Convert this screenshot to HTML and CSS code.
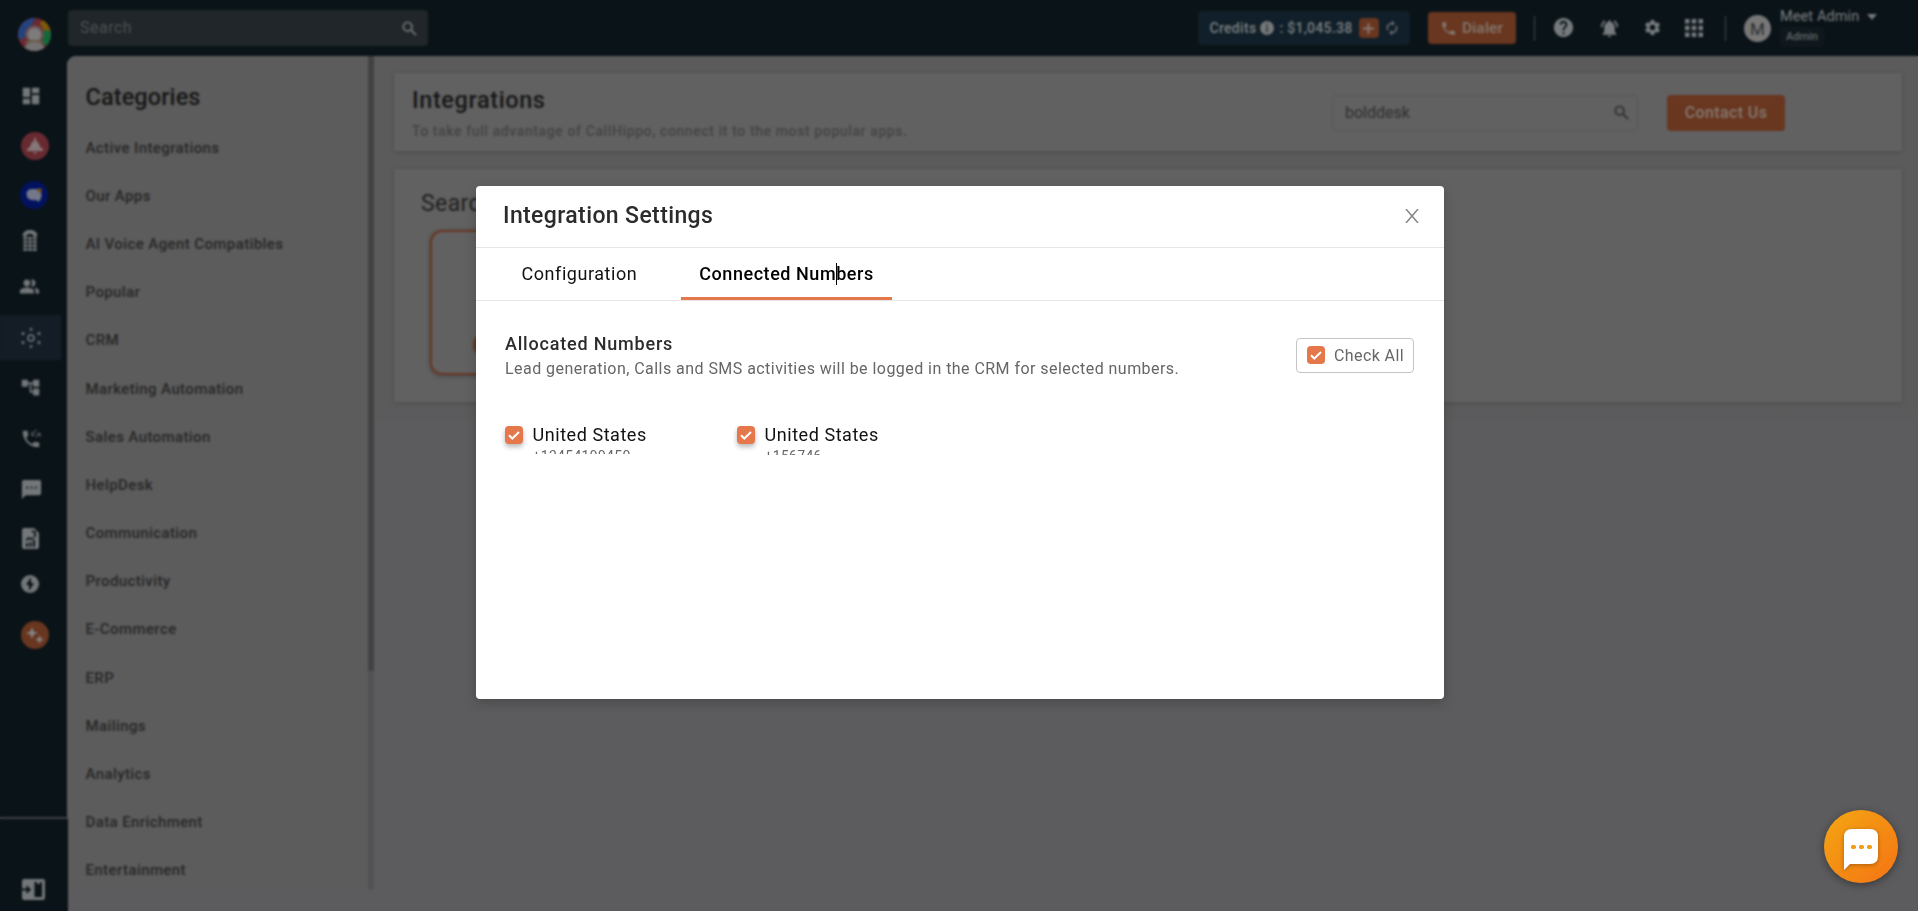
FILE: index.html
```html
<!DOCTYPE html>
<html lang="en">
<head>
<meta charset="utf-8">
<title>Integrations</title>
<link rel="stylesheet" href="styles.css">
</head>
<body>
<div class="app">
  <aside class="rail">
    <svg class="logo" viewBox="0 0 32 32"><defs><clipPath id="lc"><circle cx="16" cy="16" r="16"/></clipPath></defs><g clip-path="url(#lc)"><rect width="32" height="32" fill="#6b2830"/><path d="M0 20V0h17L6 20z" fill="#26427d"/><path d="M21 5l6-5 5 12-5 3z" fill="#7d5a08"/><path d="M25 12h7v17l-12-6z" fill="#14683a"/><circle cx="16" cy="16" r="9" fill="#6e4f50"/><circle cx="16" cy="16" r="6.500" fill="#7c7c7c"/><path d="M5 32q2-9 11-9t11 9z" fill="#737373"/><path d="M7 24q9-4 18 0" fill="none" stroke="#6d5845" stroke-width="2"/></g></svg>
    <svg class="ic i1" viewBox="0 0 24 24"><path d="M3 13h8V3H3v10zm0 8h8v-6H3v6zm10 0h8V11h-8v10zm0-18v6h8V3h-8z"/></svg>
    <svg class="round i2" viewBox="0 0 28 28"><circle cx="14" cy="14" r="14" fill="#682a31"/><path d="M13 6h2v3q3 1 4 6l3 2v2H6v-2l3-2q1-5 4-6zM12 20h4l-2 2z" fill="#857678"/></svg>
    <svg class="round i3" viewBox="0 0 28 28"><circle cx="14" cy="14" r="14" fill="#02125f"/><path d="M6.500 13q0-5 6-5h4q5 1 5 6 0 4-2 5v2l-4-2q-9 1-9-6z" fill="#73788a"/><circle cx="19.500" cy="9.500" r="2.300" fill="#7d5420"/></svg>
    <svg class="ic i4" viewBox="0 0 16 22"><path d="M0 6q1-6 8-6t8 6l-4 1q-1-3-4-3T4 7z"/><path d="M1 7h4v3H1zm5 0h4v3H6zm5 0h4v3h-4zM1 11h4v3H1zm5 0h4v3H6zm5 0h4v3h-4zM1 15h4v3H1zm5 0h4v3H6zm5 0h4v3h-4zM1 19h4v3H1zm5 0h4v3H6zm5 0h4v3h-4z"/></svg>
    <svg class="ic i5" viewBox="0 0 24 24"><path d="M16.670 13.130C18.040 14.060 19 15.320 19 17v3h4v-3c0-2.180-3.570-3.470-6.330-3.870zM15 12c2.210 0 4-1.790 4-4s-1.790-4-4-4c-.47 0-.91.1-1.330.24C14.500 5.270 15 6.580 15 8s-.5 2.730-1.330 3.760c.42.140.86.240 1.330.24zM9 12c2.210 0 4-1.790 4-4s-1.790-4-4-4-4 1.790-4 4 1.790 4 4 4zm0 1c-2.670 0-8 1.340-8 4v3h16v-3c0-2.660-5.330-4-8-4z"/></svg>
    <div class="active"><svg class="ic" viewBox="0 0 20 20"><circle cx="10" cy="10" r="3" fill="none" stroke="#70767b" stroke-width="1.600"/><g><circle cx="10" cy="1.400" r="1.400"/><circle cx="10" cy="18.600" r="1.400"/><circle cx="2" cy="5.500" r="1.500"/><circle cx="18" cy="5.500" r="1.500"/><circle cx="2" cy="14.500" r="1.500"/><circle cx="18" cy="14.500" r="1.500"/></g></svg></div>
    <svg class="ic i7" viewBox="0 0 24 24"><path d="M22 11V3h-7v3H9V3H2v8h7V8h2v10h4v3h7v-8h-7v3h-2V8h2v3z"/></svg>
    <svg class="ic i8" viewBox="0 0 24 24"><path d="M20 15.500c-1.250 0-2.450-.2-3.570-.57-.35-.11-.74-.03-1.020.24l-2.200 2.200c-2.830-1.440-5.150-3.750-6.590-6.590l2.200-2.210c.28-.26.36-.65.25-1C8.700 6.450 8.500 5.250 8.500 4c0-.55-.45-1-1-1H4c-.55 0-1 .45-1 1 0 9.390 7.610 17 17 17 .55 0 1-.45 1-1v-3.500c0-.55-.45-1-1-1z"/><path d="M18 2l-5 5V4M12 8h4M17 10l5-4v4M22 6h-4" fill="none" stroke="#5a5e60" stroke-width="1.200"/></svg>
    <svg class="ic i9" viewBox="0 0 24 24"><path d="M20 2H4c-1.100 0-2 .9-2 2v18l4-4h14c1.100 0 2-.9 2-2V4c0-1.100-.9-2-2-2zM8.500 11h-2V9h2zm4.500 0h-2V9h2zm4.500 0h-2V9h2z"/></svg>
    <svg class="ic i10" viewBox="0 0 17 21"><path d="M2 0h10l5 5v14q0 2-2 2H2q-2 0-2-2V2q0-2 2-2z"/><path d="M9.500 3l3.500 1v5M4 12l3-2 2 1 3-1" fill="none" stroke="#0a1318" stroke-width="1.800"/><path d="M4 15h2v4H4zm3.500-1h2v5h-2zm3.500-2h2v7h-2z" fill="#0a1318"/></svg>
    <svg class="ic i11" viewBox="0 0 18 18"><circle cx="9" cy="9" r="9"/><path d="M10 2L5 10h3v6l5-8h-3z" fill="#0a1318"/></svg>
    <svg class="round i12" viewBox="0 0 28 28"><circle cx="14" cy="14" r="14" fill="#693620"/><path d="M11 6l1.600 4.400L17 12l-4.400 1.600L11 18l-1.600-4.400L5 12l4.400-1.600zM18.500 14l1.200 3.300 3.300 1.200-3.300 1.200-1.200 3.300-1.200-3.300-3.300-1.200 3.300-1.200z" fill="#858585"/></svg>
    <div class="railfoot"><svg class="ic" viewBox="0 0 23 21"><rect width="23" height="21" rx="2"/><path d="M12.500 3H20v15h-7.500z" fill="#0a1318"/><path d="M15 3h3v2h-3z"/><path d="M0 9.500h4.500V6L9 10.500 4.500 15v-3.500H0z" fill="#0a1318"/></svg></div>
  </aside>
  <div class="page">
    <header class="top">
      <div class="gsearch"><span>Search</span><svg viewBox="0 0 16 16"><circle cx="6" cy="6" r="4.600"/><path d="M9.500 9.500L15 15"/></svg></div>
      <div class="credits"><span>Credits</span><svg class="info" viewBox="0 0 14 14"><circle cx="7" cy="7" r="7" fill="#777"/><path d="M6 3h2v2H6zm0 3h2v5H6z" fill="#33424a"/></svg><span class="amt">: $1,045.38</span><b class="plus"><svg viewBox="0 0 12 12"><path d="M6 0v12M0 6h12" stroke="#857a74" stroke-width="2"/></svg></b><svg class="sync" viewBox="0 0 24 24"><path d="M12 6v3l4-4-4-4v3c-4.420 0-8 3.580-8 8 0 1.570.46 3.030 1.240 4.260L6.700 14.800c-.45-.83-.7-1.790-.7-2.800 0-3.310 2.690-6 6-6zm6.760 1.740L17.300 9.200c.44.840.7 1.790.7 2.800 0 3.310-2.690 6-6 6v-3l-4 4 4 4v-3c4.420 0 8-3.580 8-8 0-1.570-.46-3.030-1.240-4.260z"/></svg></div>
      <div class="dialer"><svg viewBox="0 0 24 24"><path d="M6.620 10.790c1.440 2.830 3.760 5.140 6.590 6.590l2.200-2.200c.27-.27.67-.36 1.020-.24 1.120.37 2.330.57 3.570.57.55 0 1 .45 1 1V20c0 .55-.45 1-1 1C10.610 21 3 13.390 3 4c0-.55.45-1 1-1h3.500c.55 0 1 .45 1 1 0 1.250.2 2.450.57 3.570.11.35.03.74-.25 1.020z"/></svg>Dialer</div>
      <i class="sep s1"></i>
      <svg class="tic help" viewBox="0 0 24 24"><path d="M12 2C6.480 2 2 6.480 2 12s4.480 10 10 10 10-4.480 10-10S17.520 2 12 2zm1 17h-2v-2h2zm2.070-7.750l-.9.920C13.450 12.900 13 13.500 13 15h-2v-.5c0-1.100.45-2.100 1.170-2.830l1.240-1.260c.37-.36.59-.86.59-1.410 0-1.100-.9-2-2-2s-2 .9-2 2H8c0-2.210 1.790-4 4-4s4 1.790 4 4c0 .88-.36 1.680-.93 2.250z"/></svg>
      <svg class="tic bell" viewBox="0 0 24 24"><path d="M7.580 4.080L6.150 2.650C3.750 4.480 2.170 7.300 2.030 10.500h2c.15-2.650 1.510-4.970 3.550-6.420zm12.390 6.420h2c-.15-3.200-1.730-6.020-4.120-7.850l-1.420 1.430c2.020 1.450 3.390 3.770 3.540 6.420zM18 11c0-3.070-1.640-5.640-4.500-6.320V4c0-.83-.67-1.500-1.500-1.500s-1.500.67-1.500 1.500v.68C7.630 5.360 6 7.920 6 11v5l-2 2v1h16v-1l-2-2zm-6 11c1.100 0 2-.9 2-2h-4c0 1.100.9 2 2 2z"/></svg>
      <svg class="tic gear" viewBox="0 0 24 24"><path d="M19.140 12.940c.04-.3.060-.61.060-.94s-.02-.64-.07-.94l2.030-1.580c.18-.14.23-.41.12-.61l-1.920-3.320c-.12-.22-.37-.29-.59-.22l-2.390.96c-.5-.38-1.030-.7-1.620-.94l-.36-2.540c-.04-.24-.24-.41-.48-.41h-3.840c-.24 0-.43.17-.47.41l-.36 2.540c-.59.24-1.130.57-1.620.94l-2.390-.96c-.22-.08-.47 0-.59.22L2.740 8.870c-.12.210-.08.470.12.610l2.030 1.580c-.05.3-.09.63-.09.940s.02.640.07.940l-2.030 1.580c-.18.140-.23.410-.12.610l1.920 3.320c.12.220.37.290.59.220l2.390-.96c.5.380 1.030.7 1.620.940l.36 2.540c.05.240.24.410.48.410h3.840c.24 0 .44-.17.47-.41l.36-2.540c.59-.24 1.130-.56 1.620-.94l2.390.96c.22.080.47 0 .59-.22l1.920-3.320c.12-.22.070-.47-.12-.61zM12 15.600c-1.980 0-3.600-1.620-3.600-3.600s1.620-3.600 3.600-3.600 3.600 1.620 3.600 3.600-1.620 3.600-3.600 3.600z"/></svg>
      <svg class="tic grid" viewBox="0 0 18 18"><path d="M0 0h4.500v4.500H0zm6.750 0h4.500v4.500h-4.500zm6.750 0H18v4.500h-4.500zM0 6.750h4.500v4.500H0zm6.750 0h4.500v4.500h-4.500zm6.750 0H18v4.500h-4.500zM0 13.500h4.500V18H0zm6.750 0h4.500V18h-4.500zm6.750 0H18V18h-4.500z"/></svg>
      <i class="sep s2"></i>
      <div class="avatar">M</div>
      <div class="user"><div class="uname">Meet Admin<i class="caret"></i></div><div class="role">Admin</div></div>
    </header>
    <div class="body">
      <nav class="cats">
        <h2>Categories</h2>
        <ul><li>Active Integrations</li><li>Our Apps</li><li>AI Voice Agent Compatibles</li><li>Popular</li><li>CRM</li><li>Marketing Automation</li><li>Sales Automation</li><li>HelpDesk</li><li>Communication</li><li>Productivity</li><li>E-Commerce</li><li>ERP</li><li>Mailings</li><li>Analytics</li><li>Data Enrichment</li><li>Entertainment</li></ul>
      </nav>
      <div class="track"><div class="thumb"></div></div>
      <main class="main">
        <section class="card intro">
          <div class="txt"><h1>Integrations</h1><p>To take full advantage of CallHippo, connect it to the most popular apps.</p></div>
          <div class="field"><span>bolddesk</span><svg viewBox="0 0 16 16"><circle cx="6" cy="6" r="4.600"/><path d="M9.500 9.500L15 15"/></svg></div>
          <div class="contact">Contact Us</div>
        </section>
        <section class="card results"><h3>Search</h3><div class="appcard"><div class="pill"></div></div></section>
      </main>
    </div>
  </div>
</div>
<div class="overlay">
  <div class="modal">
    <div class="mhead"><span>Integration Settings</span><svg viewBox="0 0 14 14"><path d="M1 0l12 14M13 0L1 14"/></svg></div>
    <div class="tabs"><div class="tab">Configuration</div><div class="tab on">Connected Num<i class="cursor"></i>bers</div></div>
    <div class="mbody">
      <div class="alloc">
        <div><h4>Allocated Numbers</h4><p>Lead generation, Calls and SMS activities will be logged in the CRM for selected numbers.</p></div>
        <div class="checkall"><b class="cb"><svg viewBox="0 0 18 18"><path d="M4 9.200l3.300 3.300L14 6"/></svg></b>Check All</div>
      </div>
      <div class="nums">
        <div class="num"><b class="cb sh"><svg viewBox="0 0 18 18"><path d="M4 9.200l3.300 3.300L14 6"/></svg></b><div><div class="country">United States</div><div class="tel t1">+13454199450</div></div></div>
        <div class="num"><b class="cb sh"><svg viewBox="0 0 18 18"><path d="M4 9.200l3.300 3.300L14 6"/></svg></b><div><div class="country">United States</div><div class="tel t2">+156746</div></div></div>
      </div>
    </div>
  </div>
</div>
<div class="fab"><svg viewBox="0 0 34 41"><path d="M8 0h18q8 0 8 8v19q0 8-8 8H6l-6 6V8q0-8 8-8z" fill="#fff"/><g fill="#f39c12"><rect x="7" y="16" width="5" height="4" rx="1.800"/><rect x="15" y="16" width="5" height="4" rx="1.800"/><rect x="23" y="16" width="5" height="4" rx="1.800"/></g></svg></div>
</body>
</html>
```
FILE: styles.css
```css
* { box-sizing: border-box; margin: 0; padding: 0; }
body { width: 1918px; height: 911px; overflow: hidden; font-family: Roboto, "Liberation Sans", sans-serif; background: #5c5c5e; }
i { font-style: normal; }
svg { display: block; flex: none; }
.app { display: flex; height: 911px; background: #0a1318; }

.rail { width: 67px; flex: none; display: flex; flex-direction: column; align-items: flex-start; padding-top: 18px; background: #0a1318; position: relative; z-index: 1; }
.ic { fill: #737779; }
.logo { width: 33px; height: 33px; margin-left: 18px; }
.round { width: 28px; height: 28px; }
.i1 { width: 22px; height: 22px; margin: 34px 0 0 20px; }
.i2 { margin: 25px 0 0 21px; }
.i3 { margin: 21px 0 0 20px; }
.i4 { width: 16px; height: 21px; margin: 21px 0 0 22px; }
.i5 { width: 21px; height: 21px; margin: 25px 0 0 19px; }
.active { width: 61px; height: 45px; margin-top: 18px; padding: 13px 0 0 21px; background: #141c25; }
.active .ic { width: 20px; height: 20px; fill: #70767b; }
.i7 { width: 21px; height: 21px; margin: 17px 0 0 20px; }
.i8 { width: 22px; height: 22px; margin: 30px 0 0 20px; }
.i9 { width: 23px; height: 23px; margin: 28px 0 0 20px; }
.i10 { width: 17px; height: 21px; margin: 27px 0 0 22px; }
.i11 { width: 18px; height: 18px; margin: 26px 0 0 21px; }
.i12 { margin: 28px 0 0 21px; }
.railfoot { width: 68px; margin-top: auto; height: 94px; border-top: 2px solid #3b4044; padding: 60px 0 0 22px; background: #0a1318; }
.railfoot .ic { width: 23px; height: 21px; }

.page { flex: 1; display: flex; flex-direction: column; min-width: 0; }
.top { height: 56px; display: flex; align-items: flex-start; color: #7c7f81; flex: none; }
.gsearch { margin: 10px 0 0 1px; width: 360px; height: 36px; border-radius: 4px; background: #202629; display: flex; justify-content: space-between; align-items: center; padding: 0 11px 0 12px; font-size: 16px; letter-spacing: .5px; color: #4c5153; }
.gsearch span { margin-top: -2px; }
.gsearch svg, .field svg { width: 15px; height: 15px; fill: none; stroke: #6e7274; stroke-width: 2; }
.credits { margin: 11px 0 0 770px; width: 212px; height: 34px; border-radius: 4px; background: #101f29; display: flex; align-items: center; padding-left: 11.5px; font-size: 14px; font-weight: 500; letter-spacing: .3px; }
.info { width: 14px; height: 14px; margin: 0 5px 0 4px; }
.plus { width: 20px; height: 20px; border-radius: 4px; background: #693620; display: grid; place-items: center; margin: 0 5px 0 6px; }
.plus svg { width: 11px; height: 11px; }
.sync { width: 16px; height: 16px; fill: #777; }
.dialer { margin: 12px 0 0 18px; width: 88px; height: 32px; border-radius: 4px; background: #693620; display: flex; align-items: center; padding-left: 12px; gap: 5px; font-size: 15.5px; font-weight: 500; letter-spacing: .15px; color: #83786f; }
.dialer svg { width: 17px; height: 17px; fill: #83786f; }
.sep { width: 1px; height: 25px; background: #45494c; margin: 16px 0 0 18px; }
.tic { fill: #777b7d; }
.help { width: 23px; height: 23px; margin: 16px 0 0 17px; }
.bell { width: 21px; height: 21px; margin: 18px 0 0 24px; }
.gear { width: 19px; height: 19px; margin: 18px 0 0 23px; }
.grid { width: 18px; height: 18px; margin: 19px 0 0 23px; }
.s2 { margin-left: 22px; }
.avatar { margin: 15px 0 0 18px; width: 27px; height: 27px; border-radius: 50%; background: #777; color: #2b2f31; font-size: 17px; line-height: 28px; text-align: center; }
.user { margin: 8px 0 0 9px; font-size: 14.5px; }
.uname { line-height: 18px; display: flex; align-items: center; letter-spacing: .1px; }
.caret { border: 5px solid transparent; border-top: 6px solid #777; border-bottom: 0; margin-left: 8px; }
.role { width: 44px; height: 20px; margin-top: 1px; background: #10181d; border-radius: 3px; font-size: 11px; font-weight: 500; line-height: 20px; text-align: center; color: #636668; }

.body { flex: 1; display: flex; background: linear-gradient(#5b5b5b 340px, #5c5c5e 370px); min-height: 0; border-radius: 9px 0 0 0; }
.cats { width: 301px; height: 835px; padding: 27px 0 0 18.5px; background: #5c5c5c; border-radius: 9px 0 0 0; flex: none; }
.cats h2, h1 { font-size: 23.5px; font-weight: 500; color: #161616; line-height: 28px; letter-spacing: .1px; }
.cats ul { list-style: none; margin-top: 12.6px; }
.cats li { height: 48.2px; line-height: 48px; font-size: 15px; font-weight: 500; letter-spacing: .4px; color: #262626; }
.track { width: 6px; height: 834px; background: #525252; flex: none; border-radius: 0 0 3px 3px; }
.thumb { height: 615px; background: #424242; }
.main { flex: 1; padding: 17px 16px 0 20px; }
.card { background: #616161; box-shadow: 0 1px 4px #4a4a4a; border-radius: 2px; }
.intro { height: 78px; display: flex; align-items: flex-start; padding: 13px 0 0 18px; }
.txt { width: 920px; }
.intro h1 { letter-spacing: .6px; }
.intro p { font-size: 14px; font-weight: 500; line-height: 18px; margin-top: 8px; letter-spacing: .61px; color: #444; }
.field { width: 306px; height: 36px; margin-top: 9px; border: 1px solid #575757; border-radius: 4px; display: flex; align-items: center; justify-content: space-between; padding: 0 8px 1px 12px; font-size: 16px; color: #303030; }
.field svg { stroke: #303030; }
.contact { margin: 9px 0 0 29px; width: 118px; height: 36px; border-radius: 4px; background: #693620; color: #837870; font-size: 16px; font-weight: 500; line-height: 35px; text-align: center; letter-spacing: .4px; }
.results { height: 233px; margin-top: 18px; padding: 21px 0 0 27px; }
h3 { font-size: 23px; font-weight: 400; line-height: 28px; color: #202020; letter-spacing: .4px; }
.appcard { margin: 12px 0 0 9px; width: 240px; height: 145px; border: 2px solid #693620; border-radius: 12px; padding: 100px 0 0 41px; box-shadow: 0 1px 4px #444; }
.pill { width: 150px; height: 26px; border-radius: 13px; background: #693620; }

.overlay { position: absolute; inset: 0; z-index: 2; backdrop-filter: blur(1px); padding: 186px 0 0 476px; }
.modal { width: 968px; height: 513px; background: #fff; border-radius: 4px; box-shadow: 0 4px 12px rgba(0,0,0,.2); overflow: hidden; }
.mhead { height: 62px; border-bottom: 1px solid #e6e6e6; display: flex; justify-content: space-between; align-items: center; padding: 0 25px 2px 27px; font-size: 23px; font-weight: 500; letter-spacing: .38px; color: #2b2b2b; }
.mhead svg { width: 14px; height: 14px; fill: none; stroke: #858585; stroke-width: 1.5; }
.tabs { height: 53px; border-bottom: 1px solid #e6e6e6; display: flex; padding-left: 27.5px; gap: 26px; }
.tab { height: 52px; padding: 0 18px; line-height: 51px; font-size: 18px; letter-spacing: .55px; color: #111; }
.tab.on { font-weight: 500; color: #000; border-bottom: 3px solid #e5784a; }
.cursor { display: inline-block; width: 1px; height: 22px; background: #000; vertical-align: -5px; margin-right: -1px; }
.mbody { padding: 30px 30px 0 29px; }
.alloc { display: flex; justify-content: space-between; height: 100px; }
h4 { font-size: 18px; font-weight: 500; line-height: 26px; letter-spacing: .8px; color: #2c2c2c; }
.alloc p { font-size: 16px; line-height: 24px; letter-spacing: .45px; color: #666; }
.checkall { width: 118px; height: 35px; margin-top: 7px; border: 1px solid #c4c4c4; border-radius: 4px; display: flex; align-items: center; padding: 0 0 1px 10px; gap: 9px; font-size: 16px; letter-spacing: .4px; color: #666; }
.cb { display: block; width: 18px; height: 18px; background: #e5784a; border-radius: 4px; flex: none; }
.cb svg { width: 18px; height: 18px; fill: none; stroke: #fff; stroke-width: 2; }
.sh { box-shadow: 0 3px 5px rgba(0,0,0,.28); }
.nums { display: flex; margin-top: -7px; }
.num { display: flex; gap: 9.5px; width: 232px; }
.num .cb { margin-top: 2px; }
.country { font-size: 18px; line-height: 21px; letter-spacing: .55px; color: #111; }
.tel { font-size: 14px; line-height: 16px; margin-top: 3px; letter-spacing: .3px; color: #666; overflow: hidden; }
.t1 { height: 6px; }
.t2 { height: 7px; }

.fab { position: absolute; z-index: 3; left: 1824px; top: 810px; width: 74px; height: 73px; border-radius: 50%; background: linear-gradient(135deg, #f3a712, #f57314); box-shadow: 0 2px 9px rgba(0,0,0,.4); padding: 19px 0 0 20px; }
.fab svg { width: 34px; height: 41px; filter: drop-shadow(0 1px 2px rgba(0,0,0,.3)); }
```
